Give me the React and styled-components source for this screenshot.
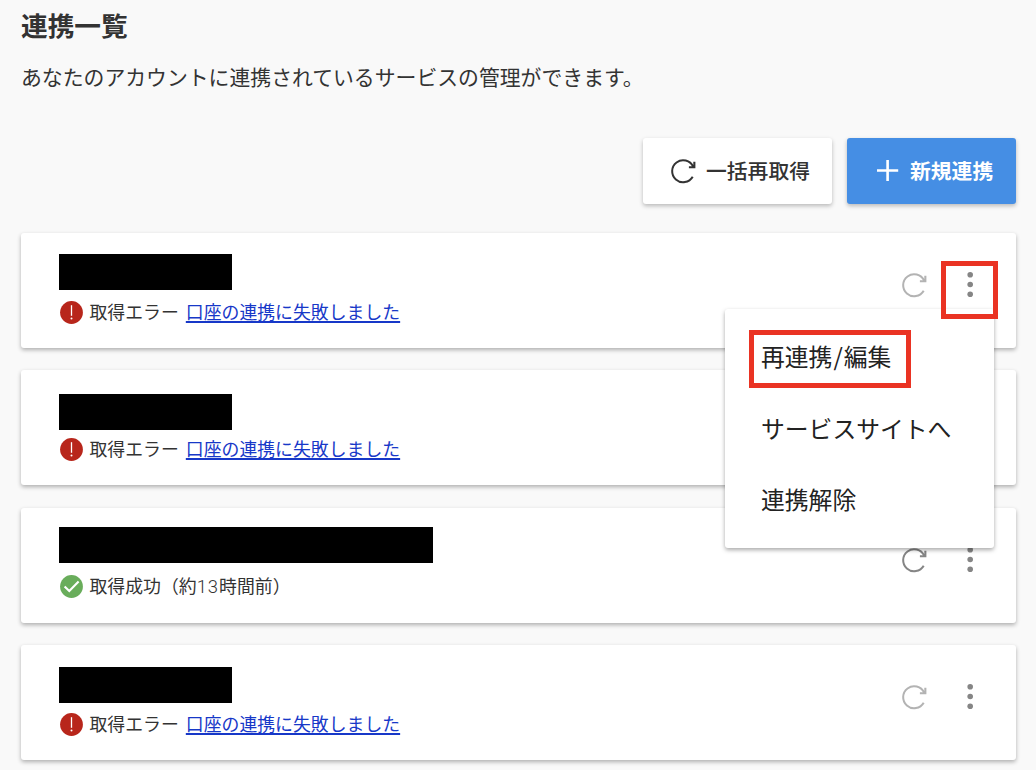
import React from "react";
import styled, { createGlobalStyle } from "styled-components";

const services = [
  { id: 1, nameWidth: 173, nameTop: 21, status: "error", menuOpen: true },
  { id: 2, nameWidth: 173, nameTop: 23.5, status: "error" },
  { id: 3, nameWidth: 374, nameTop: 19, status: "success", hours: 13 },
  { id: 4, nameWidth: 173, nameTop: 22, status: "error" },
];

function RefreshIcon() {
  return (
    <svg width="26" height="26" viewBox="0 0 26 26" fill="none">
      <path
        d="M23.1 8.5A11 11 0 1 0 22.7 18.7"
        stroke="currentColor"
        strokeWidth="2"
      />
      <path d="M25.4 3.8V10.3H18.9V8.2H21.8L23.3 6.8V3.8Z" fill="currentColor" />
    </svg>
  );
}

function ErrorIcon() {
  return (
    <svg width="23" height="23" viewBox="0 0 23 23">
      <circle cx="11.5" cy="11.5" r="11.4" fill="#b8261b" />
      <path d="M11.5 4.2V14.8" stroke="#fff" strokeWidth="1.3" />
      <circle cx="11.5" cy="17.6" r="1" fill="#fff" />
    </svg>
  );
}

function SuccessIcon() {
  return (
    <svg width="23" height="23" viewBox="0 0 23 23">
      <circle cx="11.5" cy="11.5" r="11.4" fill="#69ad5b" />
      <path
        d="M4.6 11.4L9.3 16L18.6 6.6"
        stroke="#fff"
        strokeWidth="2.1"
        fill="none"
      />
    </svg>
  );
}

function ServiceMenu() {
  return (
    <Menu>
      <MenuItem>
        再連携<Slash>/</Slash>編集
        <Highlight $top={-12} $left={-12} $width={162} $height={58} />
      </MenuItem>
      <MenuItem>サービスサイトへ</MenuItem>
      <MenuItem>連携解除</MenuItem>
    </Menu>
  );
}

function ServiceCard({ service }) {
  const isError = service.status === "error";

  return (
    <Card>
      <Info $top={service.nameTop}>
        <ServiceName $width={service.nameWidth} />
        <Status>
          {isError ? <ErrorIcon /> : <SuccessIcon />}
          {isError ? (
            <StatusText>
              取得エラー
              <ErrorLink href="#">口座の連携に失敗しました</ErrorLink>
            </StatusText>
          ) : (
            <StatusText>
              取得成功（約<Hours>{service.hours}</Hours>時間前）
            </StatusText>
          )}
        </Status>
      </Info>

      <Actions>
        <IconButton $color={isError ? "#b3b3b3" : "#858585"}>
          <RefreshIcon />
        </IconButton>
        <MenuAnchor>
          <IconButton $color="#858585">
            <svg width="8" height="26" viewBox="0 0 8 26" fill="currentColor">
              <circle cx="4.2" cy="2.8" r="2.8" />
              <circle cx="4.2" cy="12.5" r="2.8" />
              <circle cx="4.2" cy="22.2" r="2.8" />
            </svg>
          </IconButton>
          {service.menuOpen && (
            <>
              <ServiceMenu />
              <Highlight $top={-11} $left={-25} $width={57} $height={58} />
            </>
          )}
        </MenuAnchor>
      </Actions>
    </Card>
  );
}

function App() {
  return (
    <Page>
      <GlobalStyle />
      <Title>連携一覧</Title>
      <Description>
        あなたのアカウントに連携されているサービスの管理ができます。
      </Description>

      <Toolbar>
        <Button $width={189}>
          <RefreshIcon />
          <span>一括再取得</span>
        </Button>
        <Button $primary $width={169}>
          <svg width="22" height="22" viewBox="0 0 22 22">
            <path d="M10.6 0V21M0 10.5H21.2" stroke="#fff" strokeWidth="2.6" />
          </svg>
          <span>新規連携</span>
        </Button>
      </Toolbar>

      <List>
        {services.map((service) => (
          <ServiceCard key={service.id} service={service} />
        ))}
      </List>
    </Page>
  );
}

const GlobalStyle = createGlobalStyle`
  * {
    box-sizing: border-box;
  }

  body {
    margin: 0;
    overflow: hidden;
    background-color: #f9f9f9;
    color: #333;
    font-family: "Noto Sans CJK JP", sans-serif;
  }
`;

const Page = styled.main`
  height: 770px;
  padding: 5px 20px 0 21px;
`;

const Title = styled.h1`
  margin: 0;
  font-size: 26.7px;
  line-height: 40px;
  font-weight: 700;
`;

const Description = styled.p`
  margin: 16px 0 0;
  font-size: 20.85px;
  line-height: 30px;
  white-space: nowrap;
`;

const Toolbar = styled.div`
  display: flex;
  justify-content: flex-end;
  gap: 15px;
  margin-top: 47px;
`;

const Button = styled.button`
  display: flex;
  align-items: center;
  gap: ${({ $primary }) => ($primary ? "11px" : "10px")};
  width: ${({ $width }) => $width}px;
  height: 65.5px;
  padding: 0 0 0 ${({ $primary }) => ($primary ? "30px" : "27px")};
  border: none;
  border-radius: 3px;
  background-color: ${({ $primary }) => ($primary ? "#458ee4" : "#fff")};
  color: ${({ $primary }) => ($primary ? "#fff" : "#333")};
  box-shadow: 0 2px 4px rgba(0, 0, 0, 0.26);
  font-family: inherit;
  font-size: 20.8px;
  font-weight: ${({ $primary }) => ($primary ? 700 : 500)};
  white-space: nowrap;

  svg {
    flex-shrink: 0;
  }

  span {
    padding-bottom: 2px;
  }
`;

const List = styled.div`
  display: flex;
  flex-direction: column;
  gap: 22.3px;
  margin-top: 29.7px;
`;

const Card = styled.section`
  display: flex;
  justify-content: space-between;
  flex-shrink: 0;
  height: 115px;
  padding: 0 42px 0 38px;
  border-radius: 3px;
  background-color: #fff;
  box-shadow: 0 2px 4px rgba(0, 0, 0, 0.3);
`;

const Info = styled.div`
  display: flex;
  flex-direction: column;
  justify-content: space-between;
  padding: ${({ $top }) => $top}px 0 22px;
`;

const ServiceName = styled.div`
  width: ${({ $width }) => $width}px;
  height: 36.3px;
  background-color: #000;
`;

const Status = styled.div`
  display: flex;
  align-items: center;
  height: 28px;
  padding-left: 1px;
  font-size: 17.87px;
  line-height: 26px;
  white-space: nowrap;

  svg {
    margin-right: 6.5px;
  }
`;

const StatusText = styled.span`
  padding-bottom: 2px;
`;

const Hours = styled.span`
  font-family: Roboto, sans-serif;
  font-weight: 300;
  font-size: 18.4px;
  letter-spacing: 1px;
`;

const ErrorLink = styled.a`
  margin-left: 7px;
  color: #1738c8;
  text-decoration: underline;
  text-decoration-thickness: 1.5px;
  text-underline-offset: 2px;
`;

const Actions = styled.div`
  display: flex;
  align-items: flex-start;
  gap: 39px;
  padding-top: 39px;
`;

const IconButton = styled.button`
  display: flex;
  padding: 0;
  border: none;
  background: none;
  color: ${({ $color }) => $color};
`;

const MenuAnchor = styled.div`
  position: relative;
`;

const Menu = styled.div`
  position: absolute;
  z-index: 1;
  top: 37px;
  right: -19.5px;
  display: flex;
  flex-direction: column;
  gap: 43px;
  width: 268.5px;
  height: 239px;
  padding: 33px 36px 0;
  border-radius: 3px;
  background-color: #fff;
  box-shadow: 0 2px 4px rgba(0, 0, 0, 0.34);
`;

const MenuItem = styled.div`
  position: relative;
  color: #222;
  font-size: 23.8px;
  line-height: 28.5px;
  white-space: nowrap;
`;

const Slash = styled.span`
  padding: 0 1px;
`;

/* Red frame that points out where to click */
const Highlight = styled.div`
  position: absolute;
  z-index: 2;
  top: ${({ $top }) => $top}px;
  left: ${({ $left }) => $left}px;
  width: ${({ $width }) => $width}px;
  height: ${({ $height }) => $height}px;
  border: 5px solid #ea3323;
  pointer-events: none;
`;

export default App;
